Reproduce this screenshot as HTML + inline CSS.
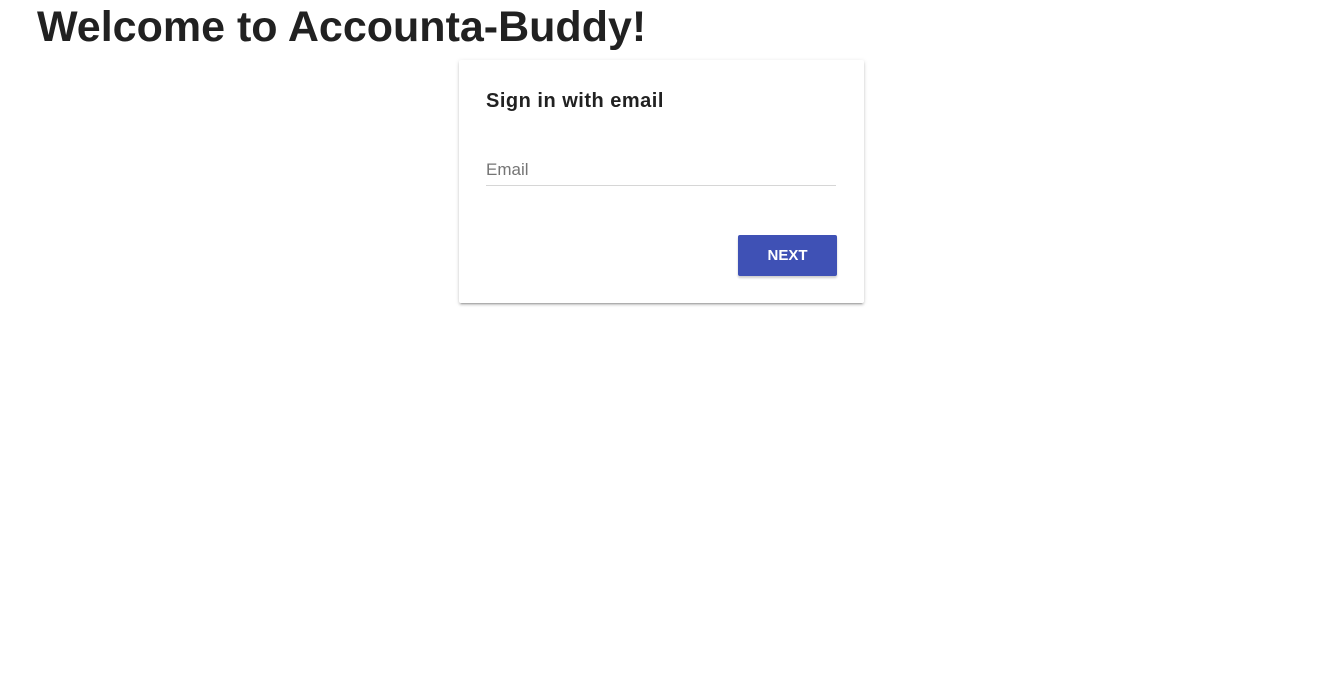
<!DOCTYPE html>
<html><head><style>
body{margin:0;background:#fff;font-family:"Liberation Sans",sans-serif;width:1320px;height:691px;overflow:hidden;position:relative}
h1{position:absolute;left:37px;top:0;margin:0;font-size:43px;font-weight:bold;color:#212121;line-height:54px;letter-spacing:0}
.card{position:absolute;left:459px;top:60px;width:405px;height:243px;background:#fff;box-shadow:0 2px 2px rgba(0,0,0,.14),0 3px 1px -2px rgba(0,0,0,.2),0 1px 5px rgba(0,0,0,.12);border-radius:2px}
.t{position:absolute;left:27px;top:30px;font-size:20px;font-weight:bold;color:#212121;letter-spacing:0.5px}
.e{position:absolute;left:27px;top:100px;font-size:17px;color:#757575}
.l{position:absolute;left:27px;top:125px;width:350px;height:1px;background:#d6d6d6}
.b{position:absolute;left:279px;top:175px;width:99px;height:41px;background:#3f51b5;color:#fff;font-weight:bold;font-size:15px;text-align:center;line-height:41px;border-radius:2px;box-shadow:0 2px 2px rgba(0,0,0,.2)}
</style></head><body>
<h1>Welcome to Accounta-Buddy!</h1>
<div class="card"><div class="t">Sign in with email</div><div class="e">Email</div><div class="l"></div><div class="b">NEXT</div></div>
</body></html>
